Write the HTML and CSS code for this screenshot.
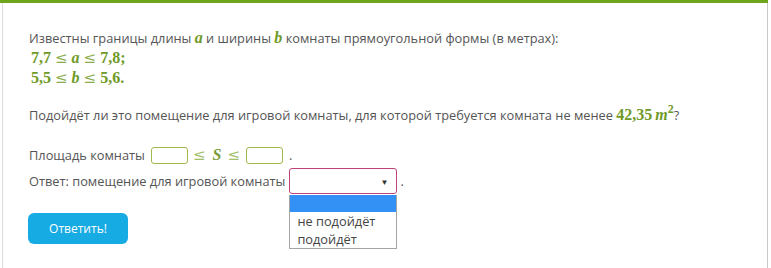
FILE: index.html
```html
<!DOCTYPE html>
<html lang="ru">
<head>
<meta charset="utf-8">
<link rel="stylesheet" href="styles.css">
</head>
<body>
<div class="topbar"></div>
<div class="card">
  <div class="task">
    <p class="para">Известны границы длины <span class="m mi">a</span> и ширины <span class="m mi">b</span> комнаты прямоугольной формы (в метрах):<br>
      <span class="m mline">7,7<span class="rel">≤</span><span class="mi">a</span><span class="rel">≤</span>7,8;</span><br>
      <span class="m mline">5,5<span class="rel">≤</span><span class="mi">b</span><span class="rel">≤</span>5,6.</span>
    </p>
    <p class="para q">Подойдёт ли это помещение для игровой комнаты, для которой требуется комната не менее <span class="m">42,35<span class="mi sp">m</span><sup class="sup">2</sup></span>?</p>
    <div class="row row1"><span class="lbl">Площадь комнаты</span><span class="inp"></span><span class="m rel2">≤</span><span class="m mi s">S</span><span class="m rel2">≤</span><span class="inp"></span><span class="dot">.</span></div>
    <div class="row row2"><span class="lbl lbl2">Ответ: помещение для игровой комнаты</span><span class="selwrap"><span class="sel"><span class="arrow">▼</span></span><span class="list"><span class="opt hl"></span><span class="opt">не подойдёт</span><span class="opt">подойдёт</span></span></span><span class="dot dot2">.</span></div>
    <button class="btn">Ответить!</button>
  </div>
</div>
</body>
</html>
```
FILE: styles.css
```css
html, body {
  margin: 0;
  padding: 0;
  background: #fff;
}
body {
  width: 771px;
  height: 268px;
  overflow: hidden;
  font-family: "Open Sans", "Liberation Sans", sans-serif;
  font-size: 12.8px;
  color: #555;
}
.topbar {
  height: 3px;
  background: #6da51d;
  margin-right: 3px;
}
.card {
  margin-left: 2px;
  margin-right: 3px;
  border-left: 1px solid #dcdcdc;
  border-right: 1px solid #c8c8c8;
  height: 265px;
}
.task {
  padding: 25px 0 0 26px;
}
.para {
  margin: 0;
  line-height: 20px;
}
.q {
  margin-top: 17px;
}
.m {
  font-family: "Liberation Serif", "DejaVu Serif", serif;
  font-weight: bold;
  color: #6f9a27;
  font-size: 16px;
}
.mi {
  font-style: italic;
}
.mline {
  margin-left: 2px;
}
.rel {
  font-family: "DejaVu Serif", serif;
  font-weight: normal;
  font-style: normal;
  color: #8aad4b;
  margin: 0 4px;
  font-size: 15px;
}
.sp {
  margin-left: 3px;
}
.sup {
  font-size: 12px;
  line-height: 0;
  vertical-align: 7px;
}
.row {
  display: flex;
  align-items: center;
}
.row1 {
  margin-top: 19px;
  height: 22px;
}
.row2 {
  height: 26px;
  margin-top: 2px;
}
.lbl {
  margin-right: 6px;
}
.lbl2 {
  margin-right: 4px;
}
.inp {
  display: inline-block;
  width: 35px;
  height: 15px;
  border: 1px solid #9fb94a;
  border-radius: 3px;
}
.rel2 {
  font-family: "DejaVu Serif", serif;
  font-weight: normal;
  color: #a3be6a;
  margin: 0 6px 0 5px;
  font-size: 15px;
}
.s {
  color: #7a9c38;
  margin: 0 1px;
}
.dot {
  margin-left: 6px;
}
.dot2 {
  margin-left: 3px;
}
.selwrap {
  position: relative;
  display: inline-block;
}
.sel {
  display: flex;
  justify-content: flex-end;
  align-items: center;
  box-sizing: border-box;
  width: 108px;
  height: 26px;
  border: 1px solid #c0427a;
  border-radius: 3px;
  padding-right: 8px;
}
.arrow {
  font-size: 8px;
  color: #333;
}
.list {
  position: absolute;
  left: 0;
  top: 27px;
  box-sizing: border-box;
  width: 108px;
  border: 1px solid #a5a5a5;
  border-top: none;
  display: flex;
  flex-direction: column;
  background: #fff;
}
.opt {
  height: 18px;
  line-height: 18px;
  padding-left: 7px;
  color: #444;
  white-space: nowrap;
}
.hl {
  background: #3390f5;
  height: 17px;
}
.btn {
  display: block;
  margin-top: 19px;
  margin-left: -1px;
  width: 100px;
  height: 31px;
  border: none;
  border-radius: 6px;
  background: #17abe3;
  color: #fff;
  font-family: "Open Sans", "Liberation Sans", sans-serif;
  font-size: 12px;
}
```
